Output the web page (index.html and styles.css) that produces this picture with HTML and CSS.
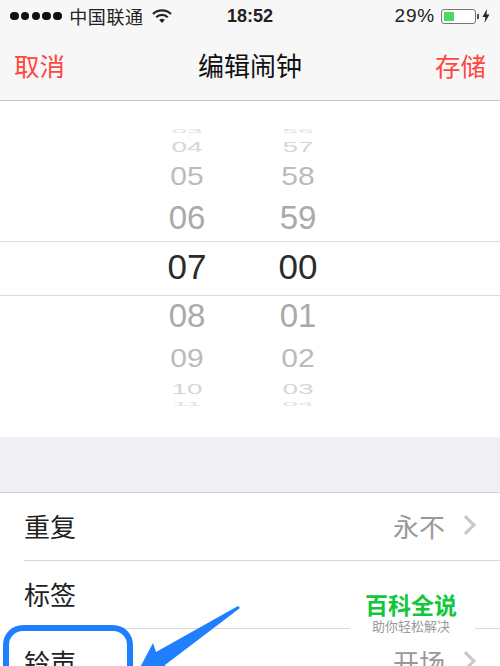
FILE: index.html
```html
<!DOCTYPE html>
<html lang="zh-CN">
<head>
    <meta charset="UTF-8">
    <title>编辑闹钟</title>
    <link rel="stylesheet" href="styles.css">
</head>
<body>
    <div class="top-bar">
        <div class="status-bar">
            <div class="status-left">
                <span class="signal"><i></i><i></i><i></i><i></i><i></i></span>
                <span class="carrier">中国联通</span>
                <svg class="wifi" width="20" height="16" viewBox="0 0 20 16">
                    <path d="M1 6 A13 13 0 0 1 19 6" fill="none" stroke="#222" stroke-width="2.2"/>
                    <path d="M4.2 9.2 A8.5 8.5 0 0 1 15.8 9.2" fill="none" stroke="#222" stroke-width="2.2"/>
                    <path d="M7.2 12 A4 4 0 0 1 12.8 12 L10 15 Z" fill="#222"/>
                </svg>
            </div>
            <div class="clock">18:52</div>
            <div class="status-right">
                <span class="percent">29%</span>
                <span class="battery"><span class="battery-level"></span></span>
                <span class="battery-nub"></span>
                <svg class="bolt" width="8" height="14" viewBox="0 0 8 14">
                    <path d="M5 0 L0.5 8 H3.5 L2.5 14 L7.5 5.5 H4.5 Z" fill="#222"/>
                </svg>
            </div>
        </div>
        <div class="nav-bar">
            <span class="nav-action">取消</span>
            <span class="nav-title">编辑闹钟</span>
            <span class="nav-action">存储</span>
        </div>
    </div>

    <div class="picker">
        <div class="wheel">
            <div class="item sliver top"><span>03</span></div>
            <div class="item far top">04</div>
            <div class="item near2 top">05</div>
            <div class="item near">06</div>
            <div class="item current">07</div>
            <div class="item near">08</div>
            <div class="item near2">09</div>
            <div class="item far">10</div>
            <div class="item sliver"><span>11</span></div>
        </div>
        <div class="wheel">
            <div class="item sliver top"><span>56</span></div>
            <div class="item far top">57</div>
            <div class="item near2 top">58</div>
            <div class="item near">59</div>
            <div class="item current">00</div>
            <div class="item near">01</div>
            <div class="item near2">02</div>
            <div class="item far">03</div>
            <div class="item sliver"><span>04</span></div>
        </div>
    </div>

    <div class="spacer"></div>

    <div class="list">
        <div class="row">
            <span>重复</span>
            <span class="row-value">永不<i class="chevron"></i></span>
        </div>
        <div class="row">
            <span>标签</span>
        </div>
        <div class="row">
            <span>铃声</span>
            <span class="row-value">开场<i class="chevron"></i></span>
        </div>
    </div>

    <!-- annotation on top of the screenshot -->
    <div class="mark-box"></div>
    <svg class="mark-arrow" width="115" height="66" viewBox="0 0 115 66">
        <path d="M6 75 L23 43 L26 52 L108 6 L110 8 L35 65 L42 78 Z" fill="#1f7fff"/>
    </svg>

    <div class="watermark">
        <div class="watermark-title">百科全说</div>
        <div class="watermark-sub">助你轻松解决</div>
    </div>
</body>
</html>
```

FILE: styles.css
```css
html, body {
    margin: 0;
    height: 666px;
    overflow: hidden;
}
body {
    position: relative;
    background-color: #fff;
    color: #111;
    font-family: "Liberation Sans", "Noto Sans CJK SC", sans-serif;
}

.top-bar {
    height: 100px;
    background-color: #f7f7f7;
    border-bottom: 1px solid #c8c8c8;
}
.status-bar {
    display: grid;
    grid-template-columns: 1fr auto 1fr;
    align-items: center;
    height: 32px;
    padding: 0 10px;
    font-size: 18px;
    color: #222;
}
.status-left {
    display: flex;
    align-items: center;
}
.signal {
    display: flex;
    gap: 2.3px;
}
.signal i {
    width: 8.5px;
    height: 8.5px;
    border-radius: 50%;
    background-color: #111;
}
.carrier {
    margin-left: 7.5px;
    font-size: 18px;
    letter-spacing: 0.6px;
}
.wifi {
    margin-left: 8px;
}
.clock {
    font-weight: bold;
    font-size: 18px;
}
.status-right {
    display: flex;
    align-items: center;
    justify-content: flex-end;
}
.percent {
    font-size: 19px;
    letter-spacing: 0.8px;
}
.battery {
    box-sizing: border-box;
    width: 35px;
    height: 15px;
    margin-left: 6px;
    padding: 2px;
    border: 1px solid #777;
    border-radius: 3px;
    background-color: #fff;
}
.battery-level {
    display: block;
    width: 10px;
    height: 100%;
    background-color: #4cd964;
}
.battery-nub {
    width: 2px;
    height: 5px;
    margin-left: 1px;
    background-color: #555;
}
.bolt {
    margin-left: 3px;
}

.nav-bar {
    display: flex;
    justify-content: space-between;
    align-items: center;
    box-sizing: border-box;
    height: 68px;
    padding: 0 14px 3px;
}
.nav-action {
    font-size: 25.5px;
    color: #ff4640;
}
.nav-title {
    font-size: 26px;
    color: #111;
}

/* selection lines go right across the picker */
.picker {
    box-sizing: border-box;
    display: flex;
    justify-content: center;
    gap: 55px;
    height: 336px;
    padding: 26px 15px 0 0;
    background-image: linear-gradient(#dcdcdc, #dcdcdc), linear-gradient(#dcdcdc, #dcdcdc);
    background-size: 100% 1px;
    background-repeat: no-repeat;
    background-position: 0 140px, 0 194px;
}
.wheel {
    width: 56px;
    text-align: center;
}
.sliver {
    height: 10px;
    line-height: 10px;
    font-size: 28px;
    color: #e2e2e2;
}
.sliver.top {
    height: 9px;
    line-height: 9px;
}
.sliver span {
    display: block;
    transform: scaleY(0.16);
}
.far {
    height: 22px;
    line-height: 22px;
    font-size: 28px;
    color: #d6d6d6;
    transform: scaleY(0.55);
}
.far.top {
    height: 21px;
    line-height: 21px;
}
.near2 {
    height: 40px;
    line-height: 40px;
    font-size: 30px;
    color: #bbb;
    transform: scaleY(0.85);
}
.near2.top {
    height: 39px;
    line-height: 39px;
}
.near {
    height: 44px;
    line-height: 44px;
    font-size: 33px;
    color: #aaa;
}
.current {
    height: 54px;
    line-height: 54px;
    font-size: 35px;
    color: #2b2b2b;
}

.spacer {
    height: 55px;
    background-color: #efeff4;
}

.list {
    border-top: 1px solid #d2d2d6;
    background-color: #fff;
}
.row {
    display: flex;
    justify-content: space-between;
    align-items: center;
    box-sizing: border-box;
    height: 68px;
    margin-left: 24px;
    padding: 0 24px 3px 0;
    border-bottom: 1px solid #d8d8dc;
    font-size: 26px;
    color: #222;
}
.row-value {
    display: flex;
    align-items: center;
    color: #999;
}
.chevron {
    box-sizing: border-box;
    width: 14px;
    height: 14px;
    margin-left: 14px;
    margin-right: 3px;
    border-top: 3px solid #c7c7cc;
    border-right: 3px solid #c7c7cc;
    transform: rotate(45deg);
}

.mark-box {
    position: absolute;
    left: 3px;
    top: 625px;
    box-sizing: border-box;
    width: 130px;
    height: 41px;
    border: 6px solid #1f7fff;
    border-bottom: 0;
    border-radius: 20px 20px 0 0;
}
.mark-arrow {
    position: absolute;
    left: 130px;
    top: 600px;
}

.watermark {
    position: absolute;
    left: 350px;
    top: 590px;
    width: 125px;
    height: 50px;
    padding-top: 3px;
    background-color: #fff;
    text-align: center;
}
.watermark-title {
    width: 122px;
    font-size: 23px;
    line-height: 26px;
    font-weight: bold;
    color: #0fc83c;
}
.watermark-sub {
    width: 122px;
    font-size: 13px;
    line-height: 16px;
    color: #999;
}
```
